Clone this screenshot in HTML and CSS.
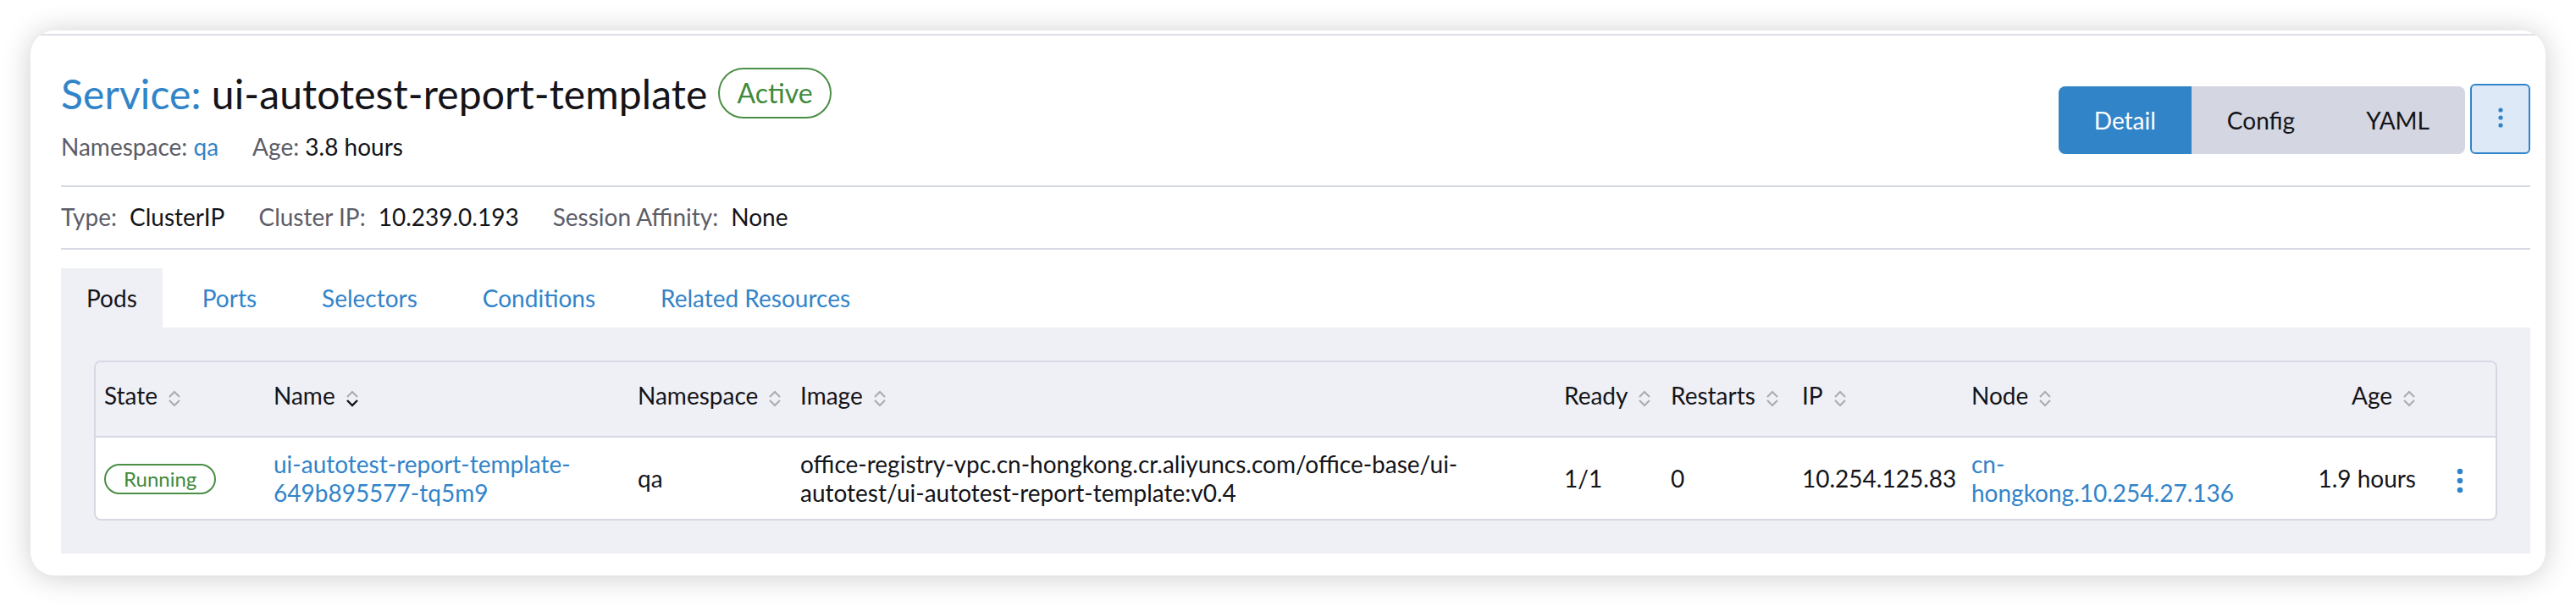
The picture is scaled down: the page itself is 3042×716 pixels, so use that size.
FILE: index.html
```html
<!DOCTYPE html>
<html lang="en">
<head>
<meta charset="utf-8">
<title>Service: ui-autotest-report-template</title>
<link rel="stylesheet" href="styles.css">
</head>
<body>
<div class="card">
  <div class="card-inner">
    <header class="masthead">
      <div class="title-block">
        <div class="title-row">
          <h1 class="title"><span class="title-kind">Service:</span> ui-autotest-report-template</h1>
          <span class="badge badge-lg">Active</span>
        </div>
        <div class="subline">
          <span class="sub-item"><span class="label">Namespace:</span> <a class="link" href="#">qa</a></span>
          <span class="sub-item"><span class="label">Age:</span> <span>3.8 hours</span></span>
        </div>
      </div>
      <div class="actions">
        <div class="seg">
          <button class="seg-btn active">Detail</button>
          <button class="seg-btn">Config</button>
          <button class="seg-btn">YAML</button>
        </div>
        <button class="more-btn" aria-label="More actions">
          <svg width="6" height="24" viewBox="0 0 6 24"><circle cx="3" cy="3" r="2.6"/><circle cx="3" cy="12" r="2.6"/><circle cx="3" cy="21" r="2.6"/></svg>
        </button>
      </div>
    </header>

    <div class="meta">
      <div class="meta-item"><span class="label">Type:</span><span>ClusterIP</span></div>
      <div class="meta-item"><span class="label">Cluster IP:</span><span>10.239.0.193</span></div>
      <div class="meta-item"><span class="label">Session Affinity:</span><span>None</span></div>
    </div>

    <ul class="tabs">
      <li class="tab active">Pods</li>
      <li class="tab"><a href="#">Ports</a></li>
      <li class="tab"><a href="#">Selectors</a></li>
      <li class="tab"><a href="#">Conditions</a></li>
      <li class="tab"><a href="#">Related Resources</a></li>
    </ul>

    <div class="tab-panel">
      <div class="table-wrap">
        <table class="sortable">
          <colgroup>
            <col class="c-state"><col class="c-name"><col class="c-ns"><col class="c-image"><col class="c-ready"><col class="c-restarts"><col class="c-ip"><col class="c-node"><col class="c-age"><col class="c-act">
          </colgroup>
          <thead>
            <tr>
              <th><div class="th-in">State<svg class="sort" width="16" height="22" viewBox="0 0 16 22"><path d="M2 9 L8 3 L14 9"/><path d="M2 13 L8 19 L14 13"/></svg></div></th>
              <th><div class="th-in">Name<svg class="sort sort-desc" width="16" height="22" viewBox="0 0 16 22"><path d="M2 9 L8 3 L14 9"/><path class="on" d="M2 13 L8 19 L14 13"/></svg></div></th>
              <th><div class="th-in">Namespace<svg class="sort" width="16" height="22" viewBox="0 0 16 22"><path d="M2 9 L8 3 L14 9"/><path d="M2 13 L8 19 L14 13"/></svg></div></th>
              <th><div class="th-in">Image<svg class="sort" width="16" height="22" viewBox="0 0 16 22"><path d="M2 9 L8 3 L14 9"/><path d="M2 13 L8 19 L14 13"/></svg></div></th>
              <th><div class="th-in">Ready<svg class="sort" width="16" height="22" viewBox="0 0 16 22"><path d="M2 9 L8 3 L14 9"/><path d="M2 13 L8 19 L14 13"/></svg></div></th>
              <th><div class="th-in">Restarts<svg class="sort" width="16" height="22" viewBox="0 0 16 22"><path d="M2 9 L8 3 L14 9"/><path d="M2 13 L8 19 L14 13"/></svg></div></th>
              <th><div class="th-in">IP<svg class="sort" width="16" height="22" viewBox="0 0 16 22"><path d="M2 9 L8 3 L14 9"/><path d="M2 13 L8 19 L14 13"/></svg></div></th>
              <th><div class="th-in">Node<svg class="sort" width="16" height="22" viewBox="0 0 16 22"><path d="M2 9 L8 3 L14 9"/><path d="M2 13 L8 19 L14 13"/></svg></div></th>
              <th class="right"><div class="th-in th-right">Age<svg class="sort" width="16" height="22" viewBox="0 0 16 22"><path d="M2 9 L8 3 L14 9"/><path d="M2 13 L8 19 L14 13"/></svg></div></th>
              <th></th>
            </tr>
          </thead>
          <tbody>
            <tr>
              <td><span class="badge badge-sm">Running</span></td>
              <td><a class="link" href="#">ui-autotest-report-template-649b895577-tq5m9</a></td>
              <td>qa</td>
              <td>office-registry-vpc.cn-hongkong.cr.aliyuncs.com/office-base/ui-autotest/ui-autotest-report-template:v0.4</td>
              <td>1/1</td>
              <td>0</td>
              <td>10.254.125.83</td>
              <td><a class="link" href="#">cn-hongkong.10.254.27.136</a></td>
              <td class="right">1.9 hours</td>
              <td class="act">
                <svg width="8" height="30" viewBox="0 0 8 30"><circle cx="4" cy="4" r="3.3"/><circle cx="4" cy="15" r="3.3"/><circle cx="4" cy="26" r="3.3"/></svg>
              </td>
            </tr>
          </tbody>
        </table>
      </div>
    </div>
  </div>
</div>
</body>
</html>
```

FILE: styles.css
```css
* { box-sizing: border-box; }

html, body {
  margin: 0;
  background: #ffffff;
}

body {
  padding: 36px 36px 37px;
  font-family: Lato, "Liberation Sans", sans-serif;
  font-size: 28px;
  line-height: normal;
  color: #141419;
}

a { text-decoration: none; }

.card {
  background: #ffffff;
  border-radius: 28px;
  box-shadow: 0 2px 34px rgba(0, 0, 0, 0.2);
  padding-top: 4px;
  overflow: hidden;
}

.card-inner {
  border-top: 2px solid #dcdee8;
  padding: 0 18px 26px 36px;
}

/* ---------- masthead ---------- */
.masthead {
  display: flex;
  justify-content: space-between;
  align-items: flex-start;
  padding: 38px 0 29px;
  border-bottom: 2px solid #d6d8e4;
}

.title-row {
  display: flex;
  align-items: center;
  gap: 13px;
  height: 60px;
}

.title {
  margin: 0;
  font-size: 48px;
  font-weight: 400;
  line-height: normal;
  white-space: nowrap;
  letter-spacing: 0.08px;
}

.title-kind { color: #3284c9; }

.badge {
  display: inline-block;
  border: 2px solid #4a8f46;
  color: #3f8a3c;
  border-radius: 999px;
  white-space: nowrap;
}

.badge-lg {
  font-size: 32px;
  line-height: 56px;
  padding: 0 20px;
}

.badge-sm {
  font-size: 24px;
  line-height: 32px;
  padding: 0 21px;
}

.subline {
  display: flex;
  gap: 40px;
  margin-top: 16px;
  line-height: 34px;
}

.label { color: #5c5d68; }

.link { color: #3284c9; }

.actions {
  display: flex;
  align-items: flex-end;
  gap: 6px;
  margin-top: 19px;
}

.seg {
  display: flex;
  border-radius: 8px;
  overflow: hidden;
  background: #d4d6e2;
}

.seg-btn {
  font-family: inherit;
  font-size: 28px;
  border: 0;
  background: transparent;
  color: #141419;
  height: 80px;
  padding: 0 42px;
  margin: 0;
}

.seg-btn.active {
  background: #3284c9;
  color: #ffffff;
}

.more-btn {
  width: 71px;
  height: 83px;
  border: 2px solid #3284c9;
  background: #dde9f6;
  border-radius: 6px;
  display: flex;
  align-items: center;
  justify-content: center;
  padding: 0;
  margin: 0;
}

.more-btn svg { fill: #3284c9; display: block; margin-top: -4px; }

/* ---------- meta ---------- */
.meta {
  display: flex;
  gap: 40px;
  padding: 18px 0 20px;
  line-height: 34px;
  border-bottom: 2px solid #d6d8e4;
}

.meta-item {
  display: flex;
  gap: 15px;
}

/* ---------- tabs ---------- */
.tabs {
  display: flex;
  list-style: none;
  margin: 22px 0 0;
  padding: 0;
}

.tab {
  padding: 0 30px;
  margin-right: 17px;
  height: 70px;
  line-height: 70px;
}

.tab a { color: #3284c9; }

.tab.active {
  background: #eff0f5;
  color: #141419;
}

.tab-panel {
  background: #eff0f5;
  padding: 39px;
}

/* ---------- table ---------- */
.table-wrap {
  border: 2px solid #d6d8e4;
  border-radius: 8px;
  overflow: hidden;
  background: #ffffff;
}

.sortable {
  width: 100%;
  border-collapse: separate;
  border-spacing: 0;
  table-layout: fixed;
}

.c-state { width: 200px; }
.c-name { width: 430px; }
.c-ns { width: 192px; }
.c-image { width: 902px; }
.c-ready { width: 126px; }
.c-restarts { width: 155px; }
.c-ip { width: 200px; }
.c-node { width: 340px; }
.c-age { width: 205px; }
.c-act { width: 84px; }

.sortable th {
  background: #eff0f5;
  font-weight: 400;
  text-align: left;
  padding: 22px 10px 31px;
  border-bottom: 2px solid #d6d8e4;
  white-space: nowrap;
  vertical-align: top;
}

.th-in {
  display: flex;
  align-items: center;
  gap: 12px;
  height: 34px;
  line-height: 34px;
}

.th-right { justify-content: flex-end; }

.sort {
  flex: none;
  margin-top: 8px;
  fill: none;
  stroke: #a9aab4;
  stroke-width: 2;
}

.sort .on {
  stroke: #141419;
  stroke-width: 2.4;
}

.sortable td {
  padding: 14px 10px;
  vertical-align: middle;
  line-height: normal;
}

.sortable .right { text-align: right; }

.sortable td.act { text-align: center; }

.act svg { fill: #3284c9; display: inline-block; vertical-align: middle; }
```
